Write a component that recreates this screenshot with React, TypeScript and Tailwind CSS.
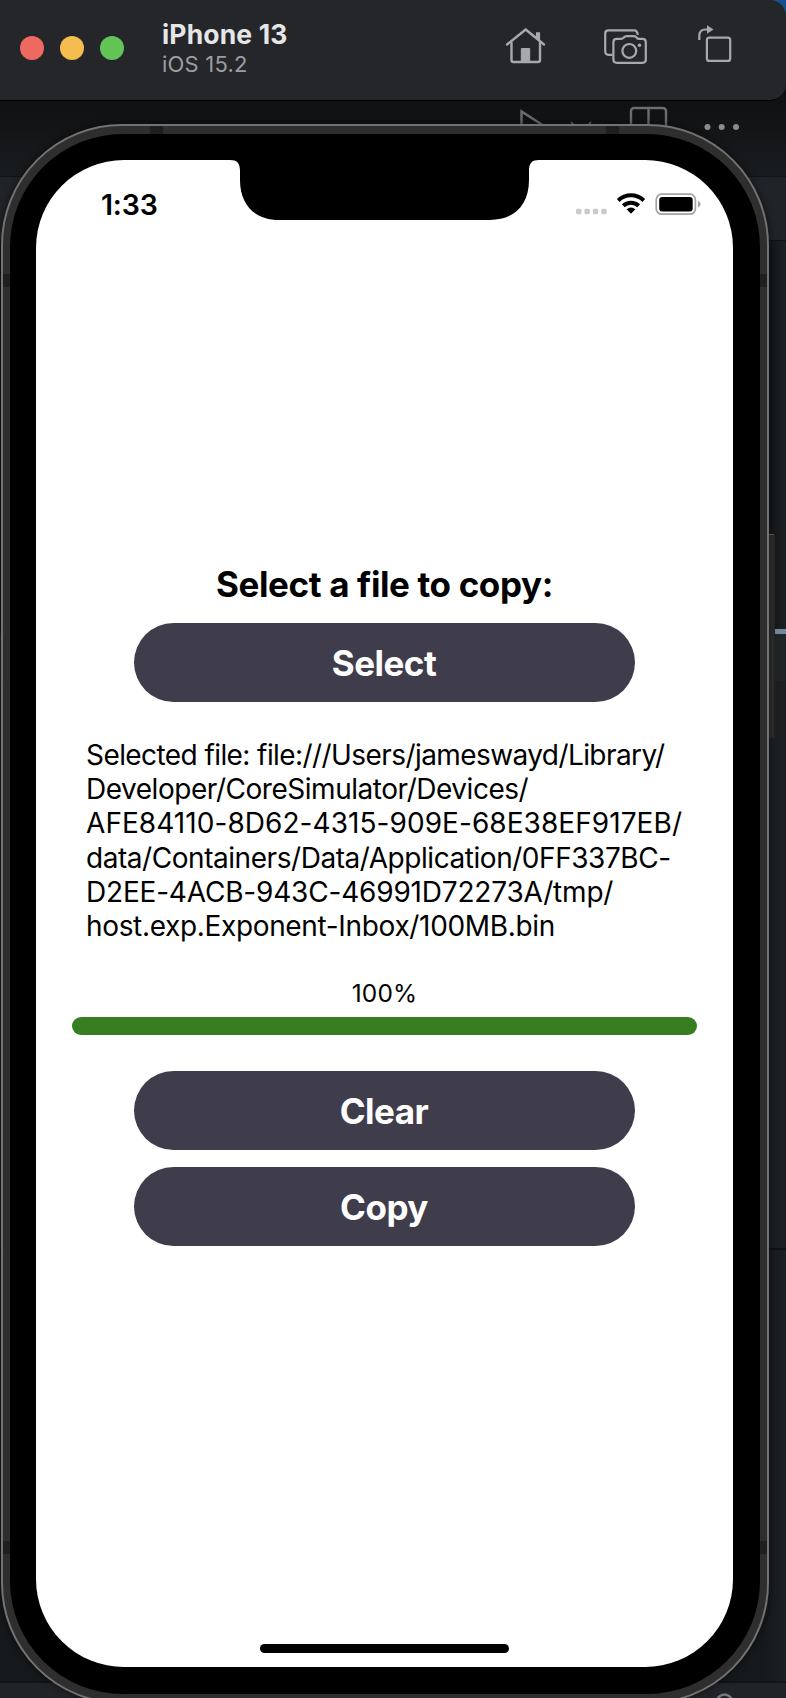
import React from "react";

const PATH_LINES: { text: string; track: string }[] = [
  { text: "Selected file: file:///Users/jameswayd/Library/", track: "tracking-[-0.580px]" },
  { text: "Developer/CoreSimulator/Devices/", track: "tracking-[-0.470px]" },
  { text: "AFE84110-8D62-4315-909E-68E38EF917EB/", track: "tracking-[0.060px]" },
  { text: "data/Containers/Data/Application/0FF337BC-", track: "tracking-[-0.450px]" },
  { text: "D2EE-4ACB-943C-46991D72273A/tmp/", track: "tracking-[-0.190px]" },
  { text: "host.exp.Exponent-Inbox/100MB.bin", track: "tracking-[-0.340px]" },
];

function HomeIcon() {
  return (
    <svg width="42" height="38" viewBox="0 0 42 38" fill="none" stroke="#a8a9ad" strokeWidth="2.4" strokeLinecap="round" strokeLinejoin="round">
      <path d="M2 17.500 L20.700 2.500 L39 17.500" />
      <path d="M6.500 15.500 V33 Q6.500 35 8.500 35 H33 Q35 35 35 33 V15.500" />
      <path d="M31.500 11 V5.800 H34.500 V13.500" fill="#a8a9ad" strokeWidth="1.200" />
      <path d="M16.300 35 V21.500 H24.700 V35 Z" fill="#a8a9ad" strokeWidth="1" />
    </svg>
  );
}

function CameraIcon() {
  return (
    <svg width="46" height="38" viewBox="0 0 46 38" fill="none" stroke="#a8a9ad" strokeWidth="2.2" strokeLinecap="butt" strokeLinejoin="round">
      <path d="M9.500 27.800 H5.500 Q2.200 27.800 2.200 24.500 V6.500 Q2.200 3.400 5.500 3.400 H31 Q34.500 3.400 34.700 8" />
      <path d="M13.700 11.900 H18 Q19.500 11.900 20.500 10.800 Q21.800 9.200 24 9.200 H30.500 Q32.500 9.200 33.800 10.800 Q34.700 11.900 36 11.900 H39.500 Q42.800 11.900 42.800 15.200 V32.500 Q42.800 35.800 39.500 35.800 H13.700 Q10.400 35.800 10.400 32.500 V15.200 Q10.400 11.900 13.700 11.900 Z" />
      <circle cx="26.300" cy="23.900" r="6.900" />
      <circle cx="36.500" cy="18.200" r="1.700" fill="#a8a9ad" stroke="none" />
    </svg>
  );
}

function RotateIcon() {
  return (
    <svg width="36" height="40" viewBox="0 0 36 40" fill="none" stroke="#a8a9ad" strokeWidth="2.200">
      <path d="M3.300 17 V13 Q3.300 6.500 9.500 6.500 H11.500" />
      <path d="M11 2.200 L17.500 6.500 L11 10.800 Z" fill="#a8a9ad" stroke="none" />
      <rect x="10.900" y="14.600" width="23.300" height="23.300" rx="2.500" />
    </svg>
  );
}

function Toolbar() {
  return (
    <header className="relative z-10 flex h-[101px] items-start rounded-r-[16px] border-b border-black bg-[#25262a]">
      <div className="flex gap-4 pl-5 pt-9">
        <span className="size-6 rounded-full bg-[#ee6a5f]" />
        <span className="size-6 rounded-full bg-[#f5bd4f]" />
        <span className="size-6 rounded-full bg-[#61c454]" />
      </div>
      <div className="pl-[38px] pt-[19px]">
        <div className="text-[26.500px] font-bold leading-[30px] tracking-[0.150px] text-[#e6e6e7]">iPhone 13</div>
        <div className="pt-px text-[22px] leading-[28px] tracking-[0.200px] text-[#9c9da0]">iOS 15.2</div>
      </div>
      <div className="ml-auto flex items-start pr-[54px] pt-[27px]">
        <HomeIcon />
        <div className="pl-[56px] pr-[47px]">
          <CameraIcon />
        </div>
        <div className="-mt-[4px]">
          <RotateIcon />
        </div>
      </div>
    </header>
  );
}

function EditorBackdrop() {
  return (
    <div className="absolute inset-0 flex flex-col bg-[#191d20]">
      <div className="h-[176px] bg-linear-to-b from-[#101113] from-60% to-[#191c1f]" />
      <div className="h-[65px] border-y border-[#111416] bg-[#202428]" />
      <div className="h-[388px] bg-linear-to-r from-[#111315] from-97% to-[#1b2023]" />
      <div className="flex h-[5px] justify-end bg-[#15191b]">
        <div className="w-[20px] bg-[#76859a]" />
      </div>
      <div className="h-[47px] bg-[#1f2426]" />
      <div className="h-[567px] bg-[#1b1f22]" />
      <div className="flex-1 border-t-2 border-[#0f1214] bg-linear-to-r from-[#15191b] from-97% to-[#1b2023]" />
      <div className="h-[17px] border-t-2 border-[#121516] bg-[#202428]" />
      <svg className="absolute left-[510px] top-[100px]" width="240" height="40" viewBox="0 0 240 40" fill="none" stroke="#6c6d6f" strokeWidth="2.400">
        <path d="M11.500 40 V11.500 L45 33" />
        <path d="M61 22 L71 32 L81 22" strokeWidth="1.500" />
        <rect x="121" y="8" width="35" height="35" rx="3" />
        <path d="M138.500 8 V40" />
        <g fill="#8a8b8d" stroke="none">
          <circle cx="197.500" cy="27" r="3" />
          <circle cx="211.700" cy="27" r="3" />
          <circle cx="226" cy="27" r="3" />
        </g>
      </svg>
      <svg className="absolute left-[713px] top-[1692px]" width="24" height="6" viewBox="0 0 24 6" fill="none" stroke="#77797b" strokeWidth="2.500">
        <circle cx="11.500" cy="10" r="7.500" />
      </svg>
    </div>
  );
}

function StatusBar() {
  return (
    <div className="flex h-[60px] items-start">
      <div className="w-[204px] pl-[65px] pt-[28px] text-[28.500px] font-semibold leading-[34px] tracking-[-0.200px]">1:33</div>
      <svg width="289" height="61" viewBox="0 0 289 61" className="-mt-px shrink-0 overflow-visible">
        <path d="M-10 0 V1 C-3 1 0 4 0 12 V21 C0 46 15 61 39 61 H250 C274 61 289 46 289 21 V12 C289 4 292 1 299 1 V0 Z" />
      </svg>
      <svg width="130" height="30" viewBox="0 0 130 30" className="ml-[44px] mt-[29px] shrink-0">
        <g fill="#cbcbcb">
          <rect x="3" y="19.700" width="5.500" height="5.500" rx="1.500" />
          <rect x="11.400" y="19.700" width="5.500" height="5.500" rx="1.500" />
          <rect x="19.800" y="19.700" width="5.500" height="5.500" rx="1.500" />
          <rect x="28.200" y="19.700" width="5.500" height="5.500" rx="1.500" />
        </g>
        <g fill="none" stroke="#000" strokeWidth="4">
          <path d="M45.200 11.500 A18.500 18.500 0 0 1 70.800 11.500" />
          <path d="M50.300 16.800 A11 11 0 0 1 65.700 16.800" />
        </g>
        <path d="M53.600 20.200 Q58 16.700 62.400 20.200 L58 24.800 Z" />
        <rect x="83.200" y="5.200" width="39.200" height="20" rx="5.500" fill="none" stroke="#a3a3a3" strokeWidth="1.700" />
        <rect x="86.200" y="8" width="33.500" height="14.500" rx="3" />
        <path d="M125 11.700 Q127.600 12.700 127.600 15.200 Q127.600 17.700 125 18.700 Z" fill="#a3a3a3" />
      </svg>
    </div>
  );
}

function PillButton({ children }: { children: React.ReactNode }) {
  return (
    <button className="flex h-[79px] w-[501px] shrink-0 items-center justify-center rounded-full bg-[#3f3d4b] pr-px pt-[2px] text-[35px] font-bold tracking-[-0.500px] text-white">
      {children}
    </button>
  );
}

function Screen() {
  return (
    <div className="flex h-[1507px] w-[697px] flex-col overflow-hidden rounded-[88px] bg-white text-black">
      <StatusBar />
      <main className="flex flex-1 flex-col items-center pt-[342px]">
        <h1 className="h-[61px] whitespace-nowrap text-[35px] font-bold leading-[44px] tracking-[-0.370px]">Select a file to copy:</h1>
        <PillButton>Select</PillButton>
        <p className="mt-[36px] w-[597px] text-[28px] leading-[34.200px]">
          {PATH_LINES.map((line) => (
            <span key={line.text} className="block whitespace-nowrap">
              <span className={line.track}>{line.text}</span>
            </span>
          ))}
        </p>
        <div className="mt-[32.500px] text-[24.500px] leading-[34px] tracking-[0.200px]">100%</div>
        <div className="mt-[7.500px] h-[18px] w-[625px] rounded-[9px] bg-[#377e22]" />
        <div className="mt-[35.500px] flex flex-col gap-[17px]">
          <PillButton>Clear</PillButton>
          <PillButton>Copy</PillButton>
        </div>
        <div className="mb-[14px] mt-auto h-[9px] w-[249px] rounded-full bg-black" />
      </main>
    </div>
  );
}

function AntennaBands() {
  return (
    <>
      <span className="absolute left-[147px] top-0 h-[8px] w-[13px] bg-[#1f1f1f]" />
      <span className="absolute right-[148px] top-0 h-[8px] w-[13px] bg-[#1f1f1f]" />
      <span className="absolute left-0 top-[148px] h-[13px] w-[7px] bg-[#1f1f1f]" />
      <span className="absolute right-0 top-[148px] h-[13px] w-[7px] bg-[#1f1f1f]" />
      <span className="absolute left-0 top-[1415px] h-[13px] w-[7px] bg-[#1f1f1f]" />
      <span className="absolute right-0 top-[1415px] h-[13px] w-[7px] bg-[#1f1f1f]" />
    </>
  );
}

export default function App() {
  return (
    <div className="relative h-[1698px] w-[786px] overflow-hidden bg-[#15508f] font-[Inter,sans-serif]">
      <div className="absolute inset-x-0 bottom-0 top-[16px] overflow-hidden">
        <div className="absolute inset-x-0 -top-[16px] bottom-0">
          <EditorBackdrop />
        </div>
      </div>
      <Toolbar />
      <div className="relative ml-px mt-[23px] w-[768px]">
        <span className="absolute left-full top-[410px] h-[205px] w-[6px] rounded-r-[2px] border border-l-0 border-[#242424] border-t-[#666] bg-[#2e2e2e]" />
        <div className="relative h-[1580px] w-[768px] rounded-[121px] border-2 border-[#727272] bg-[#2e2e2e] px-[7px] py-[8px] shadow-[0_0_6px_2px_rgba(0,0,0,0.350)]">
          <AntennaBands />
          <div className="relative h-full w-full rounded-[113px] bg-black pl-[26px] pt-[26px]">
            <Screen />
          </div>
        </div>
      </div>
    </div>
  );
}
